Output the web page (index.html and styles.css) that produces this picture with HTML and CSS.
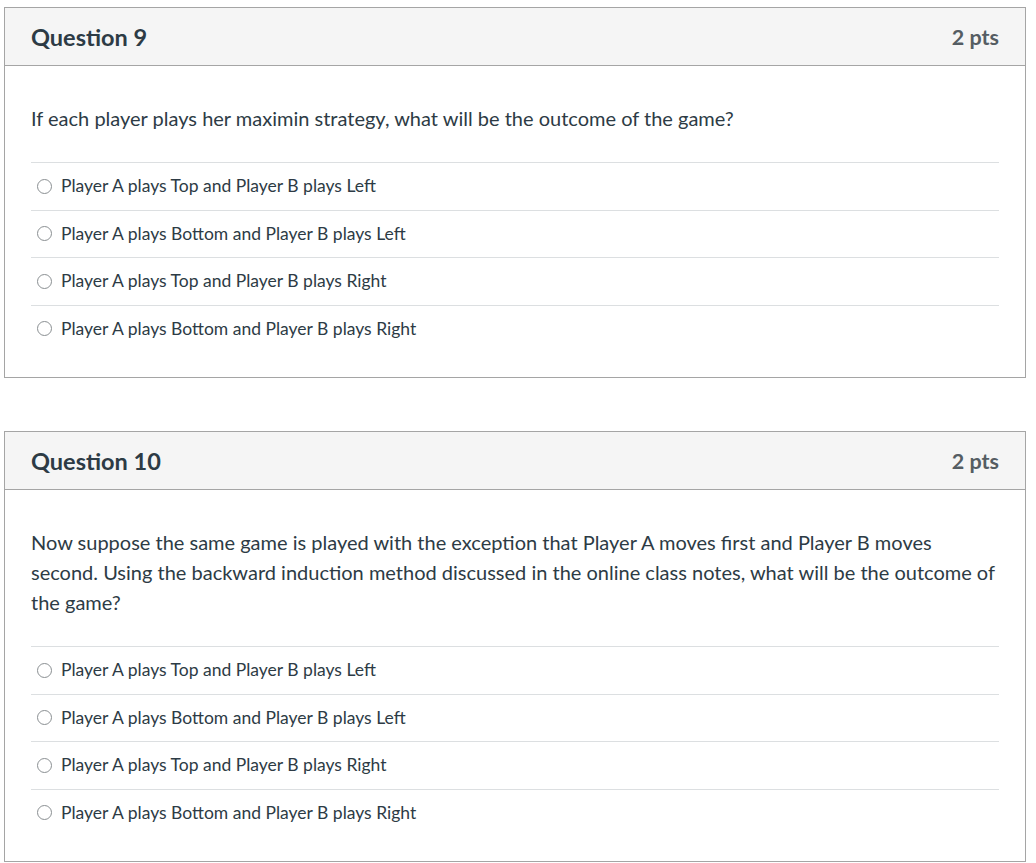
FILE: index.html
```html
<!DOCTYPE html>
<html lang="en">
<head>
<meta charset="utf-8">
<title>Quiz</title>
<link rel="stylesheet" href="styles.css">
</head>
<body>
<div class="quiz">
  <section class="question">
    <header class="q-header">
      <h2 class="q-title">Question 9</h2>
      <span class="q-points">2 pts</span>
    </header>
    <div class="q-body">
      <p class="q-text">If each player plays her maximin strategy, what will be the outcome of the game?</p>
      <ul class="answers">
        <li class="answer"><span class="radio"></span><span>Player A plays Top and Player B plays Left</span></li>
        <li class="answer"><span class="radio"></span><span>Player A plays Bottom and Player B plays Left</span></li>
        <li class="answer"><span class="radio"></span><span>Player A plays Top and Player B plays Right</span></li>
        <li class="answer"><span class="radio"></span><span>Player A plays Bottom and Player B plays Right</span></li>
      </ul>
    </div>
  </section>
  <section class="question">
    <header class="q-header">
      <h2 class="q-title">Question 10</h2>
      <span class="q-points">2 pts</span>
    </header>
    <div class="q-body">
      <p class="q-text">Now suppose the same game is played with the exception that Player A moves first and Player B moves second. Using the backward induction method discussed in the online class notes, what will be the outcome of the game?</p>
      <ul class="answers">
        <li class="answer"><span class="radio"></span><span>Player A plays Top and Player B plays Left</span></li>
        <li class="answer"><span class="radio"></span><span>Player A plays Bottom and Player B plays Left</span></li>
        <li class="answer"><span class="radio"></span><span>Player A plays Top and Player B plays Right</span></li>
        <li class="answer"><span class="radio"></span><span>Player A plays Bottom and Player B plays Right</span></li>
      </ul>
    </div>
  </section>
</div>
</body>
</html>
```

FILE: styles.css
```css
html, body {
  margin: 0;
  padding: 0;
  background: #ffffff;
}
body {
  font-family: Lato, "Open Sans", "Liberation Sans", sans-serif;
  color: #2d3b45;
}
.quiz {
  padding: 7px 10px 0 4px;
  display: flex;
  flex-direction: column;
  gap: 53px;
}
.question {
  border: 1px solid #a5a5a5;
  background: #fff;
}
.q-header {
  display: flex;
  justify-content: space-between;
  align-items: center;
  height: 57px;
  padding: 0 26px 0 26px;
  background: #f5f5f5;
  border-bottom: 1px solid #a5a5a5;
  box-sizing: content-box;
}
.q-title {
  margin: 0;
  font-size: 23.5px;
  font-weight: 700;
  color: #2d3b45;
}
.q-points {
  font-size: 21.5px;
  font-weight: 700;
  color: #555d63;
}
.q-body {
  padding: 37px 26px 25px 26px;
}
.q-text {
  margin: 0 0 29px 0;
  font-size: 20px;
  line-height: 30px;
}
.answers {
  list-style: none;
  margin: 0;
  padding: 0;
}
.answer {
  display: flex;
  align-items: center;
  gap: 9px;
  border-top: 1px solid #dcdfe1;
  padding: 11.25px 0 11.25px 6px;
  font-size: 17.5px;
  line-height: 24px;
}
.radio {
  width: 15px;
  height: 15px;
  border: 1px solid #8a8f92;
  border-radius: 50%;
  box-sizing: border-box;
  flex: none;
  background: #fff;
}
```
